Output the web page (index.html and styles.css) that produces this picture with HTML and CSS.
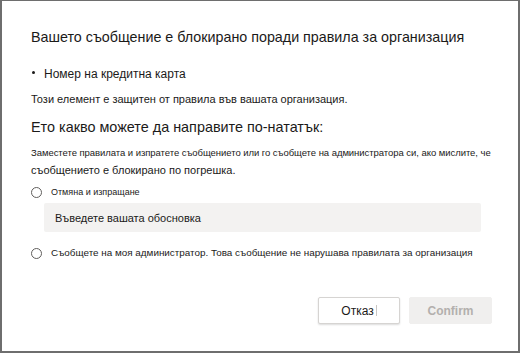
FILE: index.html
```html
<!DOCTYPE html>
<html lang="bg">
<head>
<meta charset="utf-8">
<link rel="stylesheet" href="styles.css">
</head>
<body>
<div class="dialog">
  <h1 class="title">Вашето съобщение е блокирано поради правила за организация</h1>
  <div class="list-item">
    <span class="dot"></span>
    <span class="item-text">Номер на кредитна карта</span>
  </div>
  <p class="note">Този елемент е защитен от правила във вашата организация.</p>
  <h2 class="subtitle">Ето какво можете да направите по-нататък:</h2>
  <p class="desc-a">Заместете правилата и изпратете съобщението или го съобщете на администратора си, ако мислите, че</p>
  <p class="desc-b">съобщението е блокирано по погрешка.</p>
  <div class="option option-1">
    <span class="radio"></span>
    <span class="opt-label opt-label-1">Отмяна и изпращане</span>
  </div>
  <div class="field">Въведете вашата обосновка</div>
  <div class="option option-2">
    <span class="radio"></span>
    <span class="opt-label opt-label-2">Съобщете на моя администратор. Това съобщение не нарушава правилата за организация</span>
  </div>
  <div class="actions">
    <button class="btn btn-cancel">Отказ<span class="caret"></span></button>
    <button class="btn btn-confirm">Confirm</button>
  </div>
</div>
</body>
</html>
```

FILE: styles.css
```css
* { box-sizing: border-box; }
html, body { margin: 0; padding: 0; background: #ffffff; }
body {
  font-family: "Liberation Sans", Arial, sans-serif;
  color: #1b1a19;
}
.dialog {
  width: 520px;
  height: 353px;
  border-style: solid;
  border-color: #6e6e6e;
  border-width: 1px 2px 2px 2px;
  padding: 26px 29px 0 29px;
  display: flex;
  flex-direction: column;
  white-space: nowrap;
}
.title {
  margin: 0;
  font-size: 14.3px;
  font-weight: 400;
  line-height: 20px;
}
.list-item {
  margin-top: 20px;
  display: flex;
  align-items: flex-start;
  height: 14px;
}
.dot {
  width: 3px;
  height: 3px;
  border-radius: 50%;
  background: #1b1a19;
  margin: 4px 9px 0 1px;
  flex: none;
}
.item-text {
  font-size: 12px;
  line-height: 14px;
}
.note {
  margin: 11px 0 0 0;
  font-size: 11px;
  line-height: 14px;
}
.subtitle {
  margin: 11px 0 0 0;
  font-size: 14.4px;
  font-weight: 400;
  line-height: 20px;
}
.desc-a {
  margin: 10px 0 0 0;
  font-size: 9.5px;
  letter-spacing: -0.05px;
  line-height: 12px;
}
.desc-b {
  margin: 4px 0 0 0;
  font-size: 11px;
  line-height: 14px;
}
.option {
  display: flex;
  align-items: center;
  height: 14px;
}
.option-1 { margin-top: 8px; }
.option-2 { margin-top: 14px; }
.radio {
  width: 11px;
  height: 11px;
  border: 1px solid #605e5c;
  border-radius: 50%;
  flex: none;
  margin-right: 9px;
}
.opt-label { line-height: 14px; }
.opt-label-1 { font-size: 9px; }
.opt-label-2 { font-size: 9.9px; }
.field {
  margin: 4px 8px 0 13px;
  height: 29px;
  background: #f3f2f1;
  border-radius: 2px;
  padding: 0 11px;
  display: flex;
  align-items: center;
  font-size: 11px;
}
.actions {
  margin-top: auto;
  margin-right: -3px;
  margin-bottom: 27px;
  display: flex;
  justify-content: flex-end;
  gap: 9px;
}
.btn {
  width: 82px;
  height: 27px;
  font-family: inherit;
  font-size: 12px;
  border-radius: 2px;
  padding: 0;
  display: flex;
  align-items: center;
  justify-content: center;
}
.btn-cancel {
  background: #ffffff;
  border: 1px solid #d6d4d2;
  box-shadow: 0 1px 2px rgba(0,0,0,0.14);
  color: #1b1a19;
}
.caret {
  width: 1px;
  height: 11px;
  background: #c8c6c4;
  margin-left: 2px;
}
.btn-confirm {
  width: 83px;
  background: #f0efee;
  border: 1px solid #f0efee;
  color: #b3b0ad;
  font-weight: 700;
}
```
